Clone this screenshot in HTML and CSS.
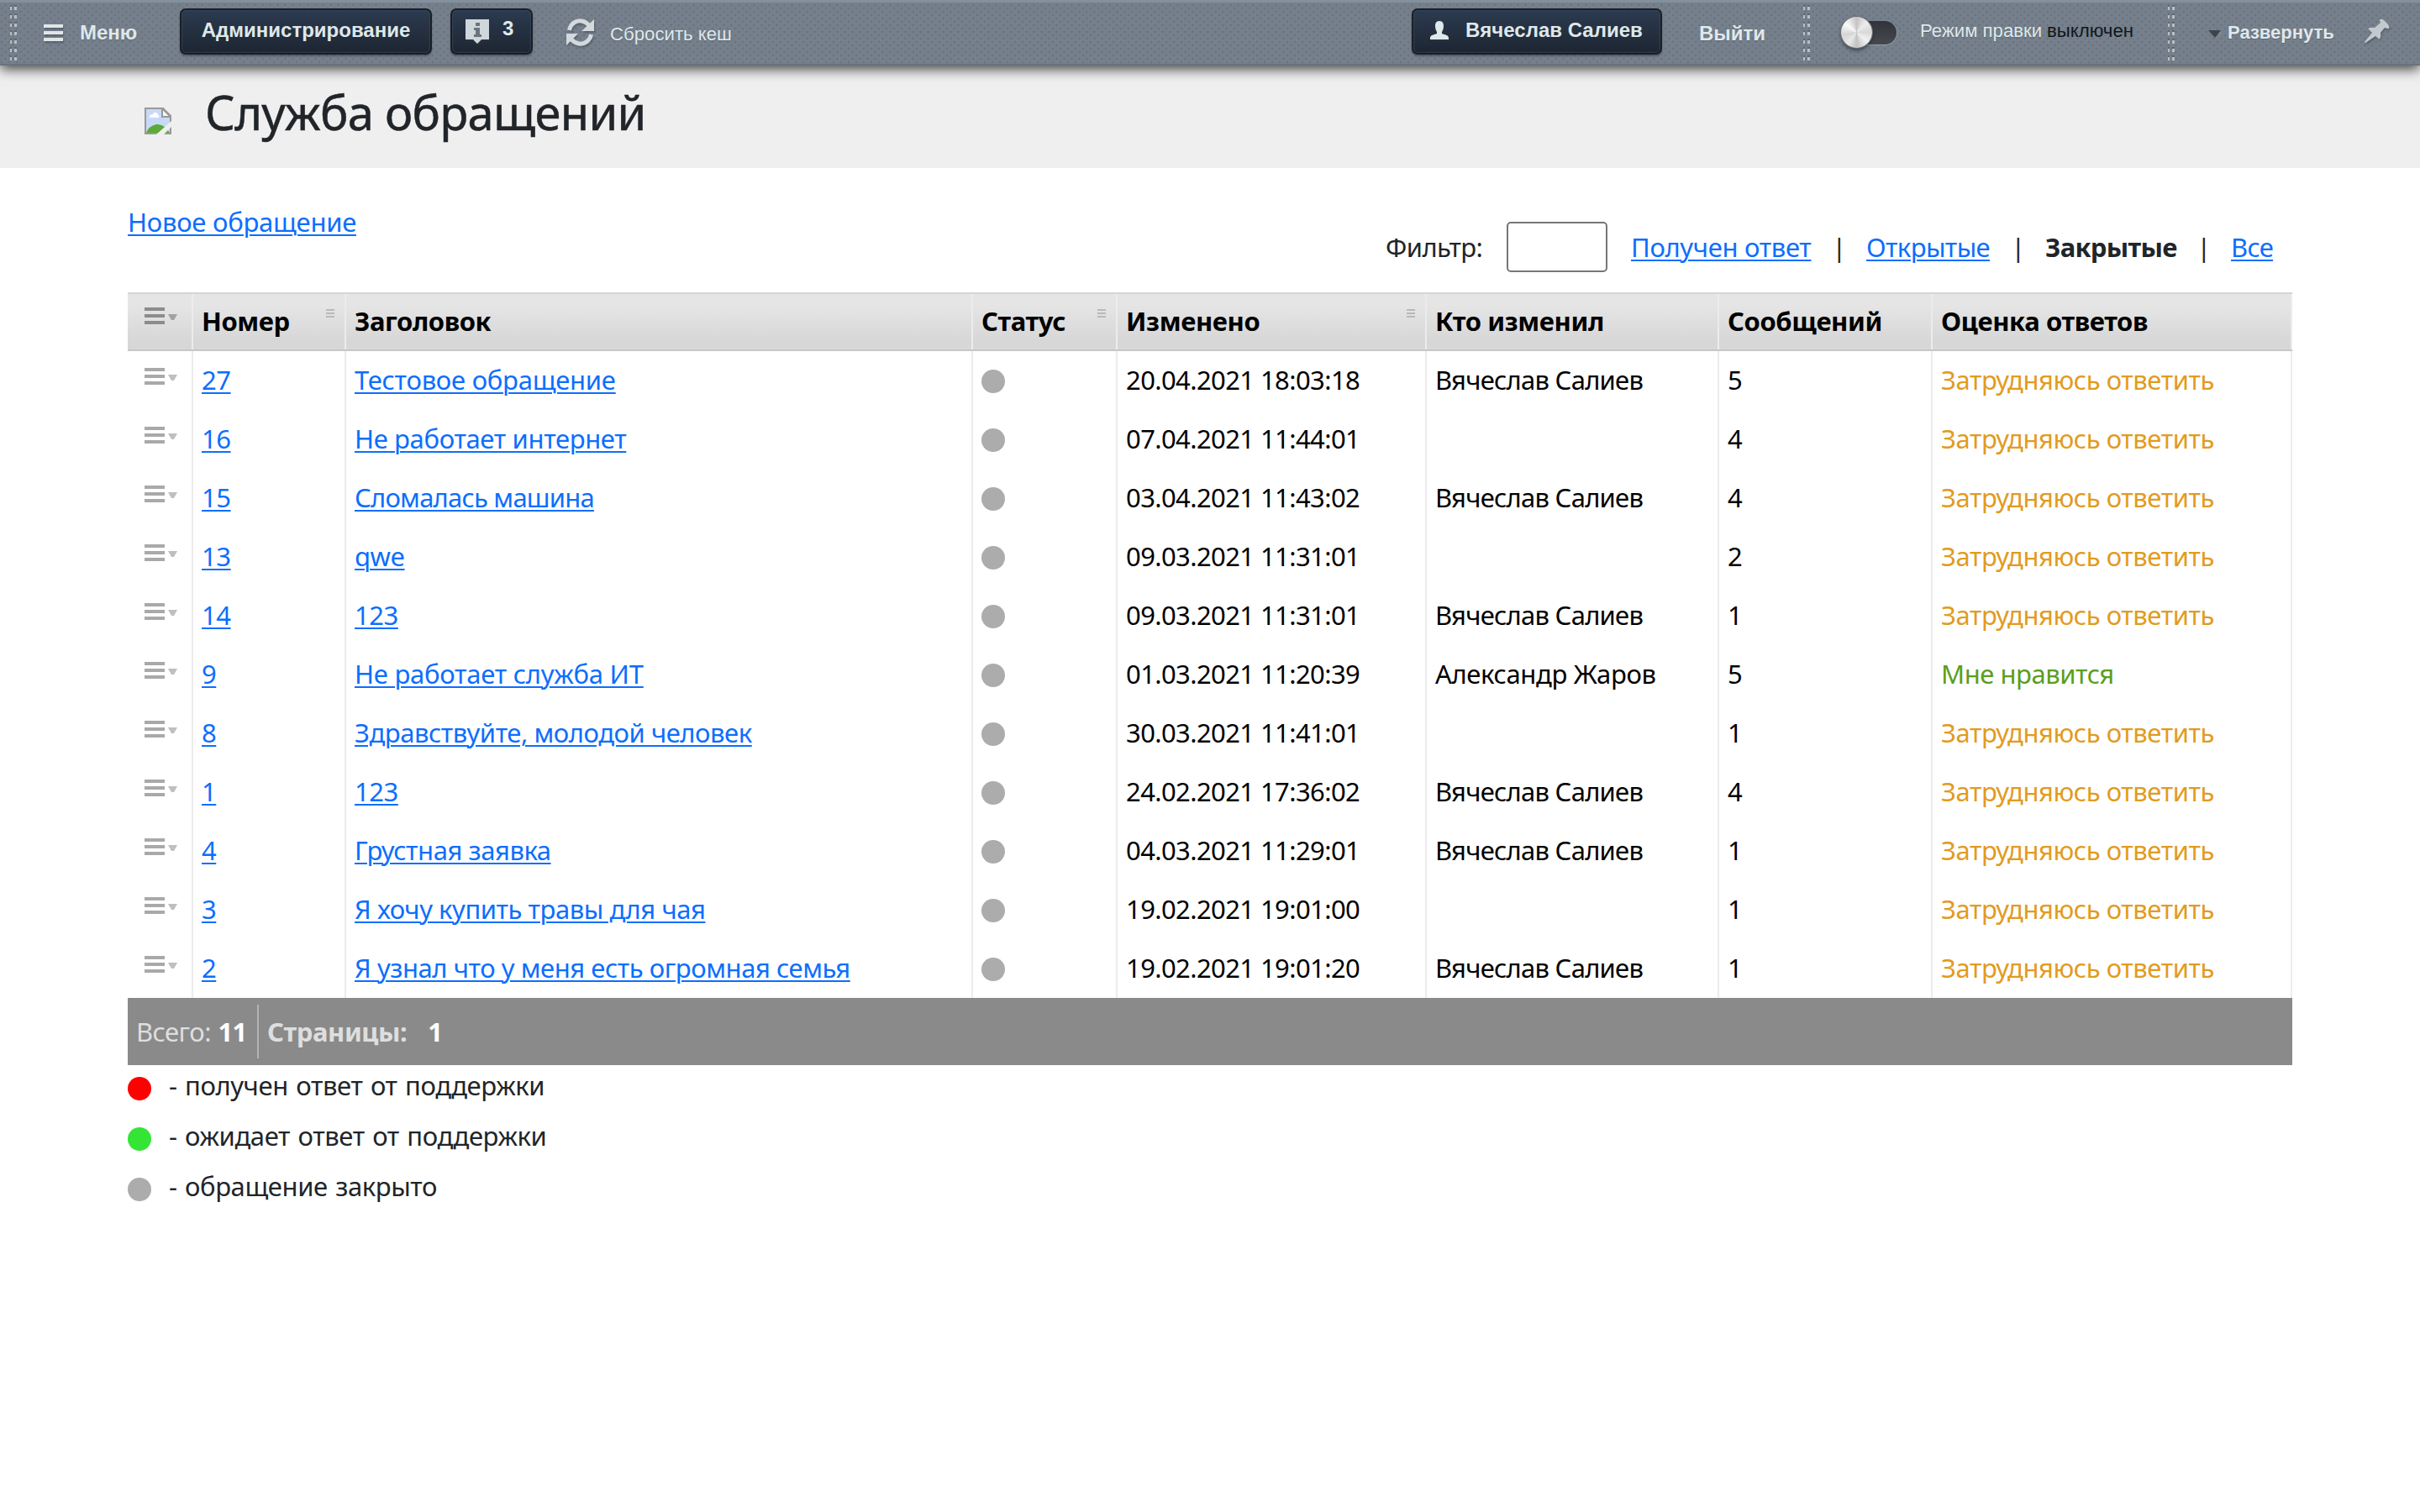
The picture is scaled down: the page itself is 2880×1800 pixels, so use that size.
FILE: index.html
```
<!DOCTYPE html>
<html lang="ru">
<head>
<meta charset="utf-8">
<title>Служба обращений</title>
<link rel="stylesheet" href="styles.css">
</head>
<body>
<svg class="defs" width="0" height="0">
  <symbol id="rowmenu" viewBox="0 0 40 20">
    <path d="M0 0h24v4H0zM0 8h24v4H0zM0 16h24v4H0z"/>
    <path d="M28 8h11l-4 7h-3z" opacity=".75"/>
  </symbol>
  <symbol id="sort" viewBox="0 0 10 10"><path d="M0 0h10v2H0zM0 4h10v2H0zM0 8h10v2H0z"/></symbol>
</svg>

<header class="panel">
  <i class="grip"></i>
  <a class="menu"><svg width="24" height="22" viewBox="0 0 24 22"><path d="M0 1h23v4H0zM0 9h23v4H0zM0 17h23v4H0z" fill="#e0e6e8"/></svg><b>Меню</b></a>
  <a class="btn btn-admin"><b>Администрирование</b></a>
  <a class="btn btn-notify">
    <svg width="29" height="29" viewBox="0 0 29 29"><path d="M0 0h28v24h-9l-5 5-5-5H0z" fill="#d0d7db"/><path d="M12 4h5v4h-5zM10 10h7v8h2v3h-9v-3h2v-5h-2z" fill="#6c757f"/></svg>
    <b>3</b>
  </a>
  <a class="cache">
    <svg width="34" height="34" viewBox="0 0 34 34"><g fill="none" stroke="#d3d9dc" stroke-width="5"><path d="M3.500 14C5 6 12 2 18 3c4 .5 6.500 2.500 9 5"/><path d="M29.500 19C28 27 21 31 15 30c-4-.5-6.500-2.500-9-5"/></g><path d="M33 1v14H18zM0 32V18h14z" fill="#d3d9dc"/></svg>
    <span>Сбросить кеш</span>
  </a>
  <a class="btn btn-user">
    <svg width="22" height="22" viewBox="0 0 22 22"><path d="M11 0c4 0 5 3 5 6s-1 5-2 7v2c3 1 8 2 8 5v2H0v-2c0-3 5-4 8-5v-2C7 11 6 9 6 6s1-6 5-6z" fill="#dfe8ea"/></svg>
    <b>Вячеслав Салиев</b>
  </a>
  <a class="logout"><b>Выйти</b></a>
  <i class="grip"></i>
  <span class="toggle"><i></i></span>
  <span class="mode"><span>Режим правки</span><em>выключен</em></span>
  <i class="grip"></i>
  <a class="expand"><svg width="16" height="11" viewBox="0 0 16 11"><path d="M8 11l8-9v-1z" fill="#a4abb3"/><path d="M0 0h15L8 9z" fill="#3f444b"/></svg><b>Развернуть</b></a>
  <svg class="pin" width="31" height="31" viewBox="0 0 31 31"><path d="M18 1q3-1 6 2l4 4q2 3 1 5-3 0-5-1l-5 6q1 4-1 8l-5-4L1 29l-1-1 9-11-5-5q4-2 8-1l7-6q-1-2-1-4z" fill="#c3cacd"/></svg>
</header>

<div class="titlebar">
  <svg width="32" height="32" viewBox="0 0 32 32"><path d="M1 1h21l9 9v21H1z" fill="#c7d9f7"/><path d="M6 11q0-3 4-3 1-3 4-2 2 1 2 3 2 0 1 3H5z" fill="#fff"/><path d="M2 30Q5 22 14 20q9-1 16 10z" fill="#59aa37"/><path d="M1 1h21l9 9v21H1z" fill="none" stroke="#999" stroke-width="2"/><path d="M21 1v10h10z" fill="#f7f7f7" stroke="#999" stroke-width="2"/><path d="M32 16v7l-9 9h-9z" fill="#efefef"/></svg>
  <h1>Служба обращений</h1>
</div>

<main>
  <div class="top">
    <a class="new">Новое обращение</a>
    <div class="filter">
      <span class="flabel">Фильтр:</span><input type="text">
      <a class="f1">Получен ответ</a><span class="bar">|</span><a class="f2">Открытые</a><span class="bar">|</span><b class="f3">Закрытые</b><span class="bar">|</span><a class="f4">Все</a>
    </div>
  </div>

  <div class="grid">
    <div class="row head">
      <div><svg class="rm"><use href="#rowmenu"/></svg></div>
      <div>Номер<svg class="sort"><use href="#sort"/></svg></div>
      <div>Заголовок</div>
      <div>Статус<svg class="sort"><use href="#sort"/></svg></div>
      <div>Изменено<svg class="sort"><use href="#sort"/></svg></div>
      <div>Кто изменил</div>
      <div>Сообщений</div>
      <div>Оценка ответов</div>
    </div>
    <div class="row"><div><svg class="rm"><use href="#rowmenu"/></svg></div><div><a>27</a></div><div><a class="wide">Тестовое обращение</a></div><div><i class="dot"></i></div><div class="num">20.04.2021 18:03:18</div><div class="who">Вячеслав Салиев</div><div>5</div><div class="unsure">Затрудняюсь ответить</div></div>
    <div class="row"><div><svg class="rm"><use href="#rowmenu"/></svg></div><div><a>16</a></div><div><a class="mid">Не работает интернет</a></div><div><i class="dot"></i></div><div class="num">07.04.2021 11:44:01</div><div></div><div>4</div><div class="unsure">Затрудняюсь ответить</div></div>
    <div class="row"><div><svg class="rm"><use href="#rowmenu"/></svg></div><div><a>15</a></div><div><a class="tight">Сломалась машина</a></div><div><i class="dot"></i></div><div class="num">03.04.2021 11:43:02</div><div class="who">Вячеслав Салиев</div><div>4</div><div class="unsure">Затрудняюсь ответить</div></div>
    <div class="row"><div><svg class="rm"><use href="#rowmenu"/></svg></div><div><a>13</a></div><div><a>qwe</a></div><div><i class="dot"></i></div><div class="num">09.03.2021 11:31:01</div><div></div><div>2</div><div class="unsure">Затрудняюсь ответить</div></div>
    <div class="row"><div><svg class="rm"><use href="#rowmenu"/></svg></div><div><a>14</a></div><div><a>123</a></div><div><i class="dot"></i></div><div class="num">09.03.2021 11:31:01</div><div class="who">Вячеслав Салиев</div><div>1</div><div class="unsure">Затрудняюсь ответить</div></div>
    <div class="row"><div><svg class="rm"><use href="#rowmenu"/></svg></div><div><a>9</a></div><div><a class="wide">Не работает служба ИТ</a></div><div><i class="dot"></i></div><div class="num">01.03.2021 11:20:39</div><div class="mid">Александр Жаров</div><div>5</div><div class="liked">Мне нравится</div></div>
    <div class="row"><div><svg class="rm"><use href="#rowmenu"/></svg></div><div><a>8</a></div><div><a>Здравствуйте, молодой человек</a></div><div><i class="dot"></i></div><div class="num">30.03.2021 11:41:01</div><div></div><div>1</div><div class="unsure">Затрудняюсь ответить</div></div>
    <div class="row"><div><svg class="rm"><use href="#rowmenu"/></svg></div><div><a>1</a></div><div><a>123</a></div><div><i class="dot"></i></div><div class="num">24.02.2021 17:36:02</div><div class="who">Вячеслав Салиев</div><div>4</div><div class="unsure">Затрудняюсь ответить</div></div>
    <div class="row"><div><svg class="rm"><use href="#rowmenu"/></svg></div><div><a>4</a></div><div><a>Грустная заявка</a></div><div><i class="dot"></i></div><div class="num">04.03.2021 11:29:01</div><div class="who">Вячеслав Салиев</div><div>1</div><div class="unsure">Затрудняюсь ответить</div></div>
    <div class="row"><div><svg class="rm"><use href="#rowmenu"/></svg></div><div><a>3</a></div><div><a>Я хочу купить травы для чая</a></div><div><i class="dot"></i></div><div class="num">19.02.2021 19:01:00</div><div></div><div>1</div><div class="unsure">Затрудняюсь ответить</div></div>
    <div class="row"><div><svg class="rm"><use href="#rowmenu"/></svg></div><div><a>2</a></div><div><a>Я узнал что у меня есть огромная семья</a></div><div><i class="dot"></i></div><div class="num">19.02.2021 19:01:20</div><div class="who">Вячеслав Салиев</div><div>1</div><div class="unsure">Затрудняюсь ответить</div></div>
  </div>

  <div class="foot">
    <div class="total">Всего: <b>11</b></div>
    <div class="pages"><b>Страницы:</b><b class="page">1</b></div>
  </div>

  <ul class="legend">
    <li><i class="dot red"></i>- получен ответ от поддержки</li>
    <li><i class="dot green"></i>- ожидает ответ от поддержки</li>
    <li><i class="dot"></i>- обращение закрыто</li>
  </ul>
</main>
</body>
</html>
```
FILE: styles.css
```
* { box-sizing: border-box; }
body { margin: 0; height: 1800px; background: #fff; color: #212529; font: 31px/48px "Noto Sans", sans-serif; letter-spacing: -.45px; overflow: hidden; }
svg { flex: none; display: block; }
.defs { position: absolute; }

/* admin panel */
.panel {
  position: relative; z-index: 1;
  display: flex; align-items: center; height: 78px; padding: 0 35px 0 12px;
  background:
    linear-gradient(#84909e, #84909e) 0 0 / 100% 3px no-repeat,
    linear-gradient(#69727f, #69727f) 0 100% / 100% 2px no-repeat,
    radial-gradient(circle at 2px 2px, #6a747f 1px, transparent 1.7px) 0 0 / 9px 8px,
    radial-gradient(circle at 6.500px 6px, #6a747f 1px, transparent 1.7px) 0 0 / 9px 8px,
    #76808c;
  box-shadow: 0 4px 14px rgba(0,0,0,.75);
  color: #dfe8ea; font: 24px/28px "Liberation Sans", sans-serif; letter-spacing: 0; white-space: nowrap;
}
.panel svg { filter: drop-shadow(1px 2px 1px rgba(50,58,68,.45)); }
.panel b, .cache span, .mode { text-shadow: 0 1px 1px rgba(40,48,58,.3); }
.grip {
  flex: none; width: 8px; height: 68px;
  background: repeating-linear-gradient(transparent 0 1px, #5f6771 1px 3px, #b9bfc4 3px 7px, transparent 7px 10px);
  -webkit-mask: linear-gradient(90deg, #000 2.500px, transparent 2.500px 5.500px, #000 5.500px);
  mask: linear-gradient(90deg, #000 2.500px, transparent 2.500px 5.500px, #000 5.500px);
}
.menu { display: flex; align-items: center; gap: 19px; width: 162px; margin-left: 32px; }
.menu b { padding-bottom: 1px; }
.btn {
  display: flex; align-items: center; justify-content: center; height: 55px; margin-bottom: 4px; padding-bottom: 2px;
  border: 2px solid #1a1f26; border-radius: 7px; background: linear-gradient(#2c3b50, #1d2531);
  box-shadow: inset 0 0 2px 1px rgba(66,82,108,.5), 0 2px 2px rgba(50,58,68,.5); flex: none;
}
.btn-admin { width: 300px; }
.btn-notify { width: 98px; margin-left: 22px; justify-content: flex-start; padding-left: 16px; gap: 15px; }
.btn-notify svg { margin-top: 3px; }
.btn-notify b { padding-bottom: 5px; }
.cache { display: flex; align-items: center; gap: 18px; margin-left: 40px; font-size: 22.200px; }
.cache span { padding-top: 3px; }
.btn-user { width: 298px; margin-left: auto; justify-content: flex-start; padding-left: 20px; gap: 20px; }
.logout { width: 80px; margin: 2px 44px 0 44px; flex: none; }
.toggle { position: relative; display: flex; flex: none; align-items: center; width: 66px; height: 38px; margin: 0 28px 2px 37px; }
.toggle::before { content: ""; position: absolute; left: 16px; top: 6px; width: 50px; height: 28px; border-radius: 14px; background: linear-gradient(#30333a, #464950); box-shadow: 0 1px 0 #9aa5b1, 1px 0 0 #8d98a4; }
.toggle i { position: relative; width: 37px; height: 37px; border-radius: 50%; box-shadow: 0 0 0 1px #6a6e74, 0 3px 4px rgba(20,25,30,.6);
  background: conic-gradient(#c4c4c4, #ececec 12%, #d8d8d8 25%, #f2f2f2 36%, #c2c2c2 50%, #e8e8e8 60%, #d4d4d4 72%, #fafafa 86%, #c4c4c4); }
.mode { flex: none; display: flex; justify-content: space-between; width: 254px; margin-right: 1px; padding-bottom: 5px; font-size: 22.200px; }
.mode em { font-style: normal; color: #11161d; text-shadow: none; }
.mode + .grip { margin-left: 40px; }
.expand { flex: none; display: flex; align-items: center; gap: 7px; width: 186px; margin-left: 40px; font-size: 22px; }
.expand svg { filter: none; margin-top: 4px; }
.pin { margin-top: -4px; }

/* page title */
.titlebar { display: flex; align-items: flex-start; height: 122px; padding: 50px 0 0 172px; background: #efefef; }
.titlebar h1 { margin: -29px 0 0 40px; font: 400 56px/68px "Noto Sans", sans-serif; letter-spacing: -.7px; -webkit-text-stroke: .5px; }

main { padding: 40px 152px 0; }
a { color: #0d6efd; }
.panel a { color: inherit; }
main a { text-decoration: underline; text-decoration-thickness: 2px; text-underline-offset: 3px; }
.top { display: flex; justify-content: space-between; height: 108px; }
.new { letter-spacing: -.25px; }
.filter { display: flex; height: 60px; margin: 24px 24px 0 0; align-items: center; }
.filter > * { padding: 0; }
.flabel { width: 144px; letter-spacing: -.6px; }
.filter input { width: 120px; height: 60px; margin: 0 28px 0 0; border: 2px solid #767676; border-radius: 5px; font: inherit; }
.bar { width: 65px; text-align: center; }
.f1 { width: 215px; letter-spacing: -.33px; } .f2 { width: 148px; letter-spacing: -.6px; } .f3 { width: 156px; letter-spacing: -.7px; } .f4 { width: 49px; letter-spacing: -.7px; }

/* ticket list */
.grid { color: #000; }
.row { display: grid; grid-template-columns: 78px 182px 746px 172px 368px 348px 254px 428px; height: 70px; }
.row > div { display: flex; align-items: flex-start; padding: 10px 0 0 10px; border-right: 2px solid #ececec; white-space: nowrap; }
.row > div:first-child { padding: 20px 0 0 20px; }
.rm { width: 40px; height: 20px; fill: #a9a9a9; }
.head { border-top: 2px solid #d5d5d5; border-bottom: 2px solid #c8c8c8; background: linear-gradient(#e5e5e5 20%, #d7d7d7 85%); font-weight: 700; letter-spacing: -.4px; }
.head > div { padding-top: 8px; }
.head > div:first-child { padding-top: 16px; }
.head .rm { fill: #8c8c8c; }
.row .sort { width: 10px; height: 10px; margin: 10px 12px 0 auto; fill: #b9b9b9; }
.row .num { letter-spacing: -.6px; }
.row .who { letter-spacing: -.75px; }
.wide { letter-spacing: -.25px; }
.mid { letter-spacing: -.35px; }
.tight { letter-spacing: -.78px; }
.unsure { color: #e29b20; }
.liked { color: #5a9e1c; }
.dot { flex: none; width: 28px; height: 28px; margin-top: 12px; border-radius: 50%; background: #acacac; }

.foot { display: flex; align-items: center; height: 80px; padding-left: 10px; background: #8a8a8a; color: #dedede; line-height: 64px; }
.total { width: 146px; border-right: 2px solid #b4b4b4; white-space: nowrap; letter-spacing: -.55px; }
.total b { margin-left: 1px; }
.total b, .page { color: #fff; }
.pages { padding-left: 10px; letter-spacing: -.45px; }
.page { margin-left: 25px; }

.legend { margin: 0; padding: 0; list-style: none; letter-spacing: -.4px; word-spacing: 1.8px; }
.legend li { display: flex; gap: 21px; height: 48px; margin-bottom: 12px; }
.legend .dot { margin-top: 14px; }
.red { background: #f00; }
.green { background: #35e535; }
```
